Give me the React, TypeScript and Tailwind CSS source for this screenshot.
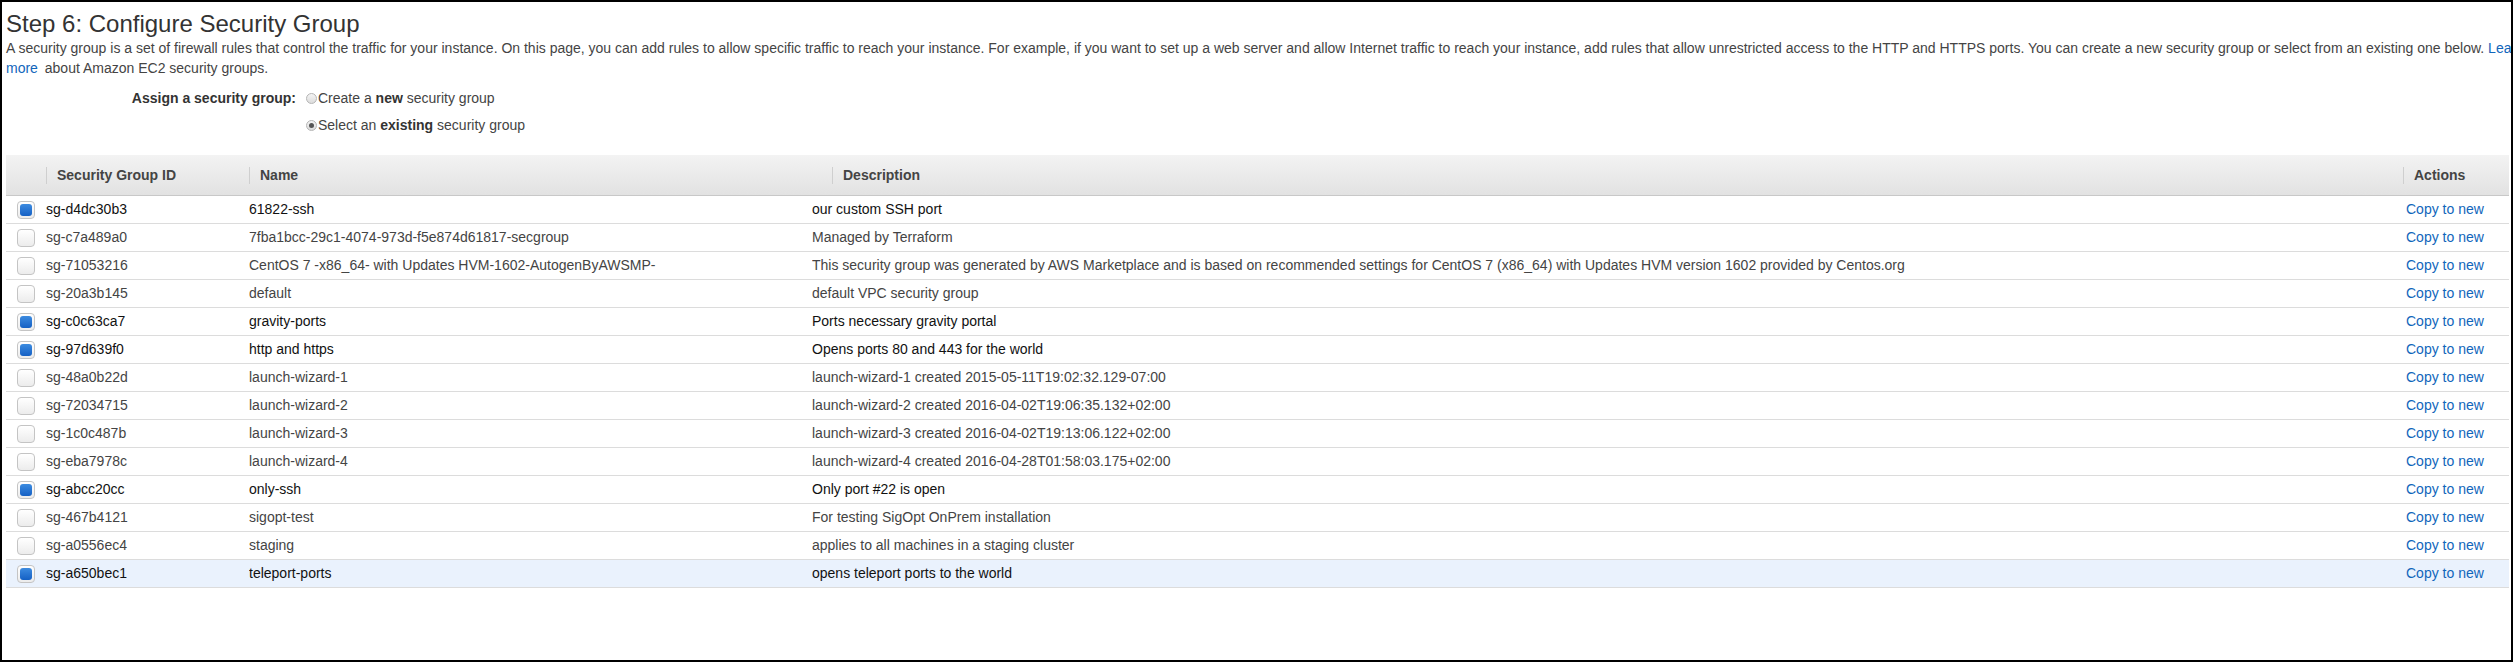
import React from "react";

type Row = { id: string; name: string; desc: string; checked?: boolean; hl?: boolean };

const rows: Row[] = [
  { id: "sg-d4dc30b3", name: "61822-ssh", desc: "our custom SSH port", checked: true },
  { id: "sg-c7a489a0", name: "7fba1bcc-29c1-4074-973d-f5e874d61817-secgroup", desc: "Managed by Terraform" },
  {
    id: "sg-71053216",
    name: "CentOS 7 -x86_64- with Updates HVM-1602-AutogenByAWSMP-",
    desc: "This security group was generated by AWS Marketplace and is based on recommended settings for CentOS 7 (x86_64) with Updates HVM version 1602 provided by Centos.org",
  },
  { id: "sg-20a3b145", name: "default", desc: "default VPC security group" },
  { id: "sg-c0c63ca7", name: "gravity-ports", desc: "Ports necessary gravity portal", checked: true },
  { id: "sg-97d639f0", name: "http and https", desc: "Opens ports 80 and 443 for the world", checked: true },
  { id: "sg-48a0b22d", name: "launch-wizard-1", desc: "launch-wizard-1 created 2015-05-11T19:02:32.129-07:00" },
  { id: "sg-72034715", name: "launch-wizard-2", desc: "launch-wizard-2 created 2016-04-02T19:06:35.132+02:00" },
  { id: "sg-1c0c487b", name: "launch-wizard-3", desc: "launch-wizard-3 created 2016-04-02T19:13:06.122+02:00" },
  { id: "sg-eba7978c", name: "launch-wizard-4", desc: "launch-wizard-4 created 2016-04-28T01:58:03.175+02:00" },
  { id: "sg-abcc20cc", name: "only-ssh", desc: "Only port #22 is open", checked: true },
  { id: "sg-467b4121", name: "sigopt-test", desc: "For testing SigOpt OnPrem installation" },
  { id: "sg-a0556ec4", name: "staging", desc: "applies to all machines in a staging cluster" },
  { id: "sg-a650bec1", name: "teleport-ports", desc: "opens teleport ports to the world", checked: true, hl: true },
];

function Checkbox({ checked }: { checked?: boolean }) {
  return (
    <div className="w-[18px] h-[18px] rounded-[4px] border border-[#c4c4c4] bg-gradient-to-b from-[#ffffff] to-[#ececec] flex items-center justify-center">
      {checked && <div className="w-[12px] h-[12px] rounded-[3px] bg-gradient-to-b from-[#3c8be0] to-[#1460c4]" />}
    </div>
  );
}

function Radio({ checked }: { checked?: boolean }) {
  return (
    <div className="w-[11px] h-[11px] rounded-full border border-[#b5b5b5] bg-gradient-to-b from-[#f4f4f4] to-[#dcdcdc] flex items-center justify-center mr-[1px]">
      {checked && <div className="w-[5px] h-[5px] rounded-full bg-[#555]" />}
    </div>
  );
}

const headGrid = "grid grid-cols-[40px_203px_583px_1571px_106px]";
const bodyGrid = "grid grid-cols-[40px_203px_563px_1591px_106px]";

function HeadCell({ label }: { label: string }) {
  return (
    <div className="flex items-center h-full">
      <div className="w-px h-[17px] bg-[#cfcfcf]" />
      <span className="pl-[10px] font-bold text-[14px] text-[#444]">{label}</span>
    </div>
  );
}

export default function App() {
  return (
    <div
      className="w-[2513px] h-[662px] border-2 border-black bg-white overflow-hidden box-border"
      style={{ fontFamily: '"Liberation Sans", Arial, sans-serif' }}
    >
      <div className="pl-[4px]">
        <h1 className="mt-[8px] text-[24px] leading-[28px] text-[#333] font-normal">Step 6: Configure Security Group</h1>
        <p className="w-[2540px] text-[14px] leading-[20px] text-[#444]">
          A security group is a set of firewall rules that control the traffic for your instance. On this page, you can add rules to allow specific traffic to reach your instance. For example, if you want to set up a web server and allow Internet traffic to reach your instance, add rules that allow unrestricted access to the HTTP and HTTPS ports. You can create a new security group or select from an existing one below.{" "}
          <a className="text-[#1166bb] mr-[3px]">Learn more</a> about Amazon EC2 security groups.
        </p>
      </div>

      <div className="mt-[7px] flex text-[14px] text-[#444]">
        <div className="w-[304px] flex justify-end h-[27px] items-center pr-[10px]">
          <span className="font-bold text-[#333]">Assign a security group:</span>
        </div>
        <div className="flex flex-col">
          <div className="h-[27px] flex items-center">
            <Radio />
            <span>
              Create a <b className="text-[#333]">new</b> security group
            </span>
          </div>
          <div className="h-[27px] flex items-center">
            <Radio checked />
            <span>
              Select an <b className="text-[#333]">existing</b> security group
            </span>
          </div>
        </div>
      </div>

      <div className="mt-[16px] ml-[4px] w-[2503px] text-[14px]">
        <div className={`${headGrid} h-[41px] border-b border-[#c8c8c8] bg-gradient-to-b from-[#f3f3f3] to-[#e2e2e2]`}>
          <div />
          <HeadCell label="Security Group ID" />
          <HeadCell label="Name" />
          <HeadCell label="Description" />
          <HeadCell label="Actions" />
        </div>
        {rows.map((r) => (
          <div
            key={r.id}
            className={`${bodyGrid} h-[28px] border-b border-[#dcdcdc] items-center ${r.hl ? "bg-[#eaf2fd]" : "bg-white"} ${r.checked ? "text-[#111]" : "text-[#444]"}`}
          >
            <div className="pl-[11px] flex items-center">
              <Checkbox checked={r.checked} />
            </div>
            <div className="whitespace-nowrap overflow-hidden">{r.id}</div>
            <div className="whitespace-nowrap overflow-hidden">{r.name}</div>
            <div className="whitespace-nowrap overflow-hidden">{r.desc}</div>
            <div className="pl-[3px] whitespace-nowrap">
              <a className="text-[#1166bb]">Copy to new</a>
            </div>
          </div>
        ))}
      </div>
    </div>
  );
}
